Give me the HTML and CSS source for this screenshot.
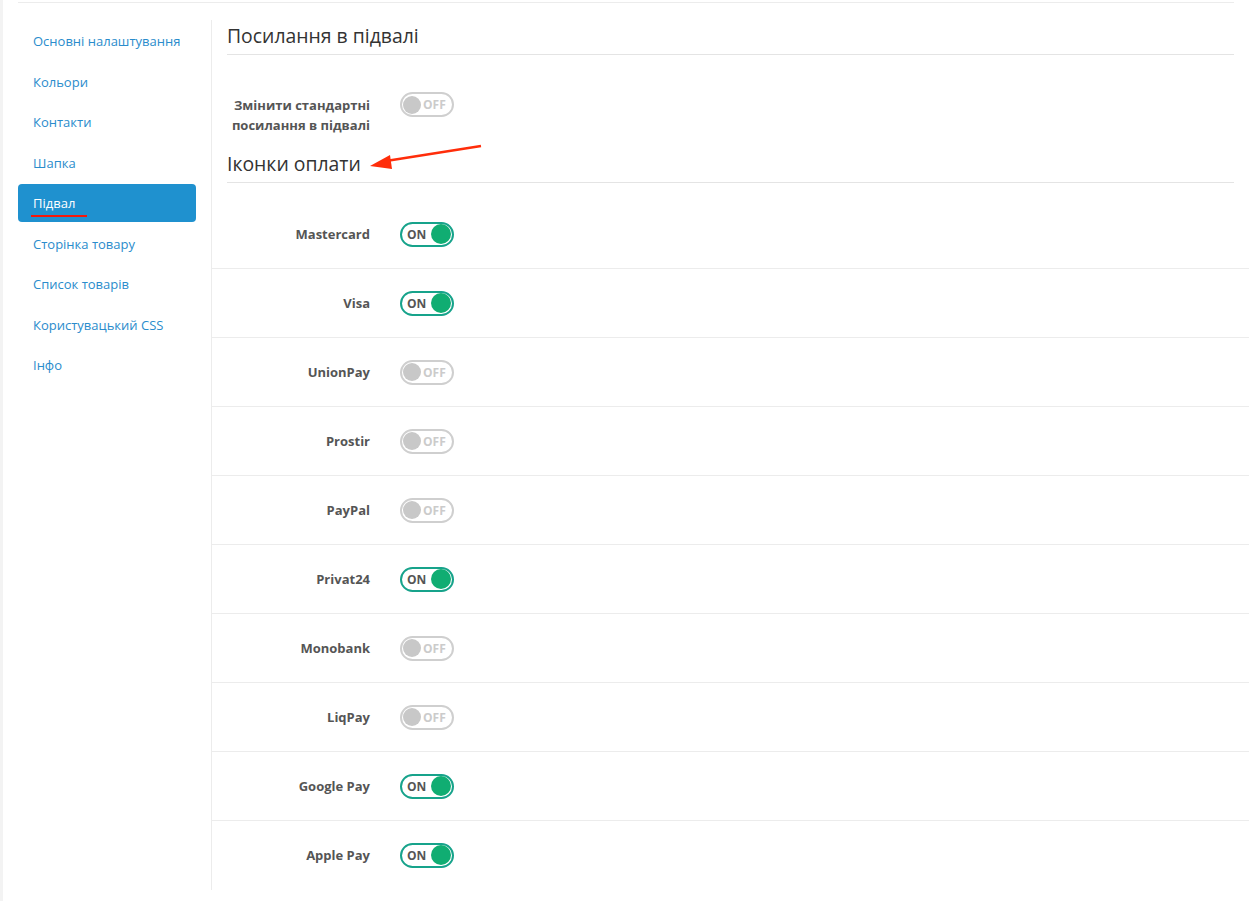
FILE: index.html
```html
<!DOCTYPE html>
<html lang="uk">
<head>
  <meta charset="UTF-8" />
  <meta name="viewport" content="width=device-width, initial-scale=1.0"/>
  <title>Налаштування теми – Підвал</title>
  <link rel="stylesheet" href="styles.css">
</head>
<body>
  <div class="page">
    <div class="top-rule"></div>

    <div class="layout">
      <nav class="sidebar">
        <a href="#">Основні налаштування</a>
        <a href="#">Кольори</a>
        <a href="#">Контакти</a>
        <a href="#">Шапка</a>
        <a href="#" class="active"><span class="mark">Підвал</span></a>
        <a href="#">Сторінка товару</a>
        <a href="#">Список товарів</a>
        <a href="#">Користувацький CSS</a>
        <a href="#">Інфо</a>
      </nav>

      <main class="content">
        <h2 class="section-title">Посилання в підвалі</h2>

        <div class="field field-first">
          <label>Змінити стандартні посилання в підвалі</label>
          <span class="switch">OFF</span>
        </div>

        <h2 class="section-title payment-title">Іконки оплати
          <svg class="arrow" width="130" height="30" viewBox="360 140 130 30">
            <line x1="386" y1="161" x2="481" y2="146" stroke="#ff2d0a" stroke-width="2.5"/>
            <polygon points="370,166 390,155 392,169" fill="#ff2d0a"/>
          </svg>
        </h2>

        <div class="rows">
          <div class="row"><label>Mastercard</label><span class="switch on">ON</span></div>
          <div class="row"><label>Visa</label><span class="switch on">ON</span></div>
          <div class="row"><label>UnionPay</label><span class="switch">OFF</span></div>
          <div class="row"><label>Prostir</label><span class="switch">OFF</span></div>
          <div class="row"><label>PayPal</label><span class="switch">OFF</span></div>
          <div class="row"><label>Privat24</label><span class="switch on">ON</span></div>
          <div class="row"><label>Monobank</label><span class="switch">OFF</span></div>
          <div class="row"><label>LiqPay</label><span class="switch">OFF</span></div>
          <div class="row"><label>Google Pay</label><span class="switch on">ON</span></div>
          <div class="row"><label>Apple Pay</label><span class="switch on">ON</span></div>
        </div>
      </main>
    </div>
  </div>
</body>
</html>
```

FILE: styles.css
```css
body {
  margin: 0;
  font-family: "Open Sans", "Liberation Sans", sans-serif;
  background: #fff;
  color: #333;
}
.page {
  border-left: 3px solid #f3f3f3;
  min-height: 901px;
  box-sizing: border-box;
}
.top-rule {
  margin: 0 15px 0 15px;
  padding-top: 2px;
  border-bottom: 1px solid #ececec;
}
.layout {
  display: flex;
  margin-top: 17px;
}
.sidebar {
  flex: 0 0 208px;
  width: 208px;
  padding: 2px 15px 0 15px;
  box-sizing: border-box;
  display: flex;
  flex-direction: column;
  gap: 2.5px;
}
.sidebar a {
  display: block;
  height: 38px;
  line-height: 38px;
  padding-left: 15px;
  font-size: 13px;
  color: #2a8ccc;
  text-decoration: none;
  border-radius: 4px;
}
.sidebar a.active {
  background: #1f91cf;
  color: #fff;
}
.sidebar .mark {
  padding: 0 12px 3px 2px;
  margin-left: -2px;
  border-bottom: 2px solid #f5180a;
}
.content {
  flex: 1;
  border-left: 1px solid #ececec;
  min-height: 870px;
}
.section-title {
  position: relative;
  margin: 5px 15px 0 15px;
  padding-bottom: 7px;
  border-bottom: 1px solid #e4e4e4;
  font-size: 19.4px;
  font-weight: 400;
  line-height: 22px;
  color: #333;
}
.payment-title {
  margin-top: 18px;
}
.arrow {
  position: absolute;
  left: 133px;
  top: -13px;
}
.field,
.row {
  display: flex;
  align-items: center;
  gap: 30px;
}
.field label,
.row label {
  flex: 0 0 158px;
  text-align: right;
  font-size: 13px;
  font-weight: 700;
  color: #555;
  line-height: 20px;
}
.field-first {
  align-items: flex-start;
  margin-top: 37px;
}
.field-first label {
  padding-top: 3px;
}
.rows {
  margin-top: 17px;
}
.row {
  height: 68px;
  border-bottom: 1px solid #ececec;
}
.row:last-child {
  border-bottom: none;
}
.switch {
  position: relative;
  display: inline-block;
  width: 54px;
  height: 25px;
  border: 2px solid #cfcfcf;
  border-radius: 13px;
  box-sizing: border-box;
  font-size: 12px;
  font-weight: 700;
  line-height: 21px;
  color: #cbcbcb;
  padding-left: 21px;
}
.switch::before {
  content: "";
  position: absolute;
  left: 1px;
  top: 1.5px;
  width: 18px;
  height: 18px;
  border-radius: 50%;
  background: #c8c8c8;
}
.switch.on {
  border-color: #17a38b;
  color: #555;
  padding-left: 5px;
}
.switch.on::before {
  left: auto;
  right: 1px;
  top: 0.5px;
  width: 20px;
  height: 20px;
  background: #10ad72;
}
```
